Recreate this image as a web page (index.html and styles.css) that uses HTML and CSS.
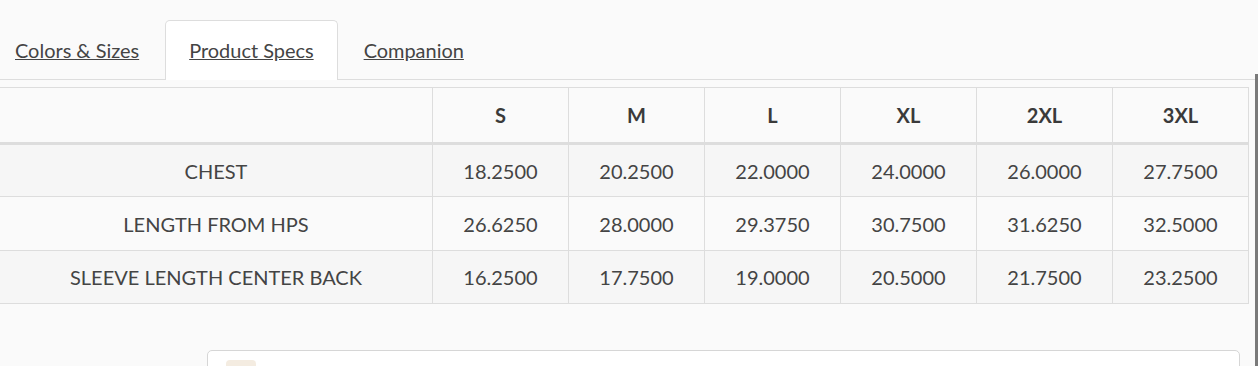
FILE: index.html
```html
<!DOCTYPE html>
<html>
<head>
<meta charset="utf-8">
<link rel="stylesheet" href="styles.css">
</head>
<body>
<div class="page">
  <div class="main">
    <ul class="tabs">
      <li class="tab"><a href="#">Colors &amp; Sizes</a></li>
      <li class="tab active"><a href="#">Product Specs</a></li>
      <li class="tab"><a href="#">Companion</a></li>
    </ul>
    <table class="specs">
      <thead>
        <tr>
          <th class="label-col"></th>
          <th>S</th><th>M</th><th>L</th><th>XL</th><th>2XL</th><th>3XL</th>
        </tr>
      </thead>
      <tbody>
        <tr class="odd">
          <td>CHEST</td>
          <td>18.2500</td><td>20.2500</td><td>22.0000</td><td>24.0000</td><td>26.0000</td><td>27.7500</td>
        </tr>
        <tr>
          <td>LENGTH FROM HPS</td>
          <td>26.6250</td><td>28.0000</td><td>29.3750</td><td>30.7500</td><td>31.6250</td><td>32.5000</td>
        </tr>
        <tr class="odd">
          <td>SLEEVE LENGTH CENTER BACK</td>
          <td>16.2500</td><td>17.7500</td><td>19.0000</td><td>20.5000</td><td>21.7500</td><td>23.2500</td>
        </tr>
      </tbody>
    </table>
    <div class="panel">
      <div class="chip"></div>
    </div>
  </div>
  <div class="edge"></div>
</div>
</body>
</html>
```

FILE: styles.css
```css
html, body {
  margin: 0;
  padding: 0;
  background: #fafafa;
  overflow: hidden;
}
body {
  font-family: Lato, "Open Sans", sans-serif;
  color: #444;
  width: 1258px;
  height: 366px;
}
.page {
  display: flex;
  height: 366px;
  overflow: hidden;
}
.main {
  width: 1255px;
  padding-top: 20px;
}
.edge {
  width: 3px;
  margin-top: 74px;
  background: #7a7a7a;
}
.tabs {
  list-style: none;
  margin: 0 0 0 -9px;
  padding: 0;
  display: flex;
  border-bottom: 1px solid #ddd;
  height: 59px;
}
.tab {
  margin-right: 2px;
  border: 1px solid transparent;
  border-bottom: 0;
  border-radius: 5px 5px 0 0;
  height: 60px;
  box-sizing: border-box;
  padding: 0 23px 2px;
  display: flex;
  align-items: center;
}
.tab.active {
  background: #fff;
  border-color: #ddd;
}
.tab a {
  color: #444;
  font-size: 19.95px;
  text-decoration: underline;
  line-height: 24px;
}
.specs {
  margin: 7px 0 0 -1px;
  border-collapse: collapse;
  table-layout: fixed;
  width: 1250px;
  font-size: 20px;
}
.specs th, .specs td {
  border: 1px solid #ddd;
  text-align: center;
  padding: 0;
  line-height: 24px;
  box-sizing: border-box;
}
.specs th {
  font-weight: 700;
  border-bottom: 3px solid #ddd;
  height: 56px;
  color: #3a3a3a;
}
.specs th.label-col {
  width: 433px;
}
.specs td {
  color: #444;
  height: 53.4px;
}
.specs tr.odd td {
  background: #f6f6f6;
}
.panel {
  margin: 46px 0 0 207px;
  width: 1033px;
  height: 40px;
  box-sizing: border-box;
  background: #fff;
  border: 1px solid #d6d6d6;
  border-radius: 5px;
  padding: 9px 0 0 18px;
}
.chip {
  width: 30px;
  height: 30px;
  background: #f4ece1;
  border-radius: 4px;
}
```
